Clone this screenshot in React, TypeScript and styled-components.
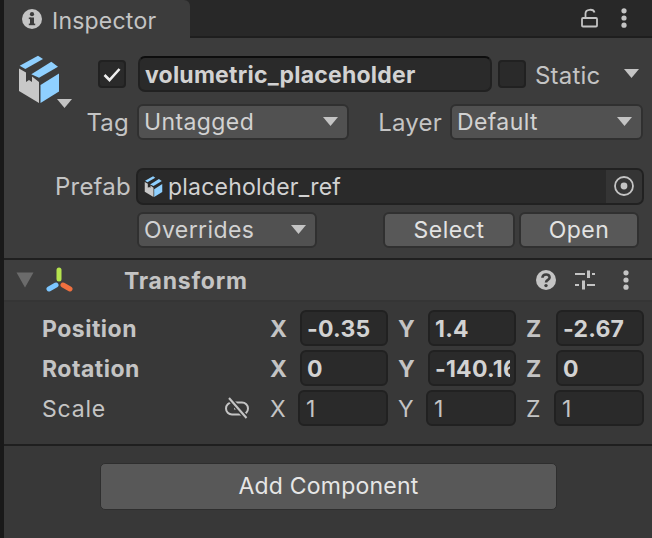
import React from "react";
import styled, { createGlobalStyle } from "styled-components";

const Global = createGlobalStyle`
  html, body { margin: 0; padding: 0; background: #383838; }
  body { font-family: "Inter", "Liberation Sans", sans-serif; }
  #root { width: 652px; height: 538px; overflow: hidden; }
  * { box-sizing: border-box; }
`;

const Root = styled.div`
  display: flex;
  width: 652px;
  height: 538px;
  font-size: 23px;
  letter-spacing: 0.22px;
  color: #c4c4c4;
`;
const Rail = styled.div`
  width: 4px;
  flex: none;
  background: #191919;
`;
const Panel = styled.div`
  flex: 1;
  display: flex;
  flex-direction: column;
  min-width: 0;
`;
const TabBar = styled.div`
  height: 38px;
  flex: none;
  display: flex;
  background: #282828;
  box-shadow: inset 0 -2px 0 #1e1e1e;
`;
const Tab = styled.div`
  width: 186px;
  height: 38px;
  display: flex;
  align-items: center;
  gap: 10px;
  padding-left: 18px;
  background: #3c3c3c;
  border-top-right-radius: 6px;
`;
const TabText = styled.span`
  padding-top: 3px;
`;
const TabTools = styled.div`
  margin-left: auto;
  display: flex;
  align-items: center;
  height: 36px;
  gap: 23px;
  padding-right: 25px;
`;
const Header = styled.section`
  height: 222px;
  flex: none;
  background: #3c3c3c;
  border-bottom: 2px solid #1f1f1f;
`;
const Identity = styled.div`
  display: flex;
  height: 102px;
`;
const IconCell = styled.div`
  width: 81px;
  flex: none;
  padding: 17px 0 0 15px;
`;
const MenuCaret = styled.svg`
  display: block;
  margin: -4px 0 0 38px;
`;
const IdentityRows = styled.div`
  flex: 1;
  display: flex;
  flex-direction: column;
  min-width: 0;
`;
const NameRow = styled.div`
  display: flex;
  align-items: center;
  height: 36px;
  margin-top: 18px;
  padding-left: 13px;
`;
const Check = styled.div<{ $gap: number }>`
  width: 28px;
  height: 28px;
  flex: none;
  margin-right: ${(p) => p.$gap}px;
  display: flex;
  align-items: center;
  justify-content: center;
  background: #2a2a2a;
  border: 2px solid #212121;
  border-radius: 4px;
`;
const NameInput = styled.div`
  width: 354px;
  height: 36px;
  flex: none;
  margin-right: 6px;
  display: flex;
  align-items: center;
  padding: 2px 0 0 5px;
  background: #2a2a2a;
  border: 2px solid #212121;
  border-top-color: #0d0d0d;
  border-radius: 7px;
  font-weight: 700;
  color: #d2d2d2;
`;
const StaticLabel = styled.span`
  flex: 1;
  padding: 2px 0 0 9px;
  font-size: 24px;
`;
const StaticArrow = styled.div`
  margin-right: 12px;
  display: flex;
`;
const TagRow = styled.div`
  display: flex;
  align-items: center;
  height: 36px;
  margin-top: 12px;
`;
const RowLabel = styled.span<{ $w: number }>`
  width: ${(p) => p.$w}px;
  flex: none;
  text-align: right;
  padding-right: 8px;
  font-size: 24px;
`;
const Select = styled.div<{ $w: number; $mr?: number }>`
  width: ${(p) => p.$w}px;
  height: 36px;
  flex: none;
  margin-right: ${(p) => p.$mr ?? 0}px;
  display: flex;
  align-items: center;
  justify-content: space-between;
  padding: 0 8px 0 5px;
  background: #515151;
  border: 2px solid #303030;
  border-radius: 6px;
  color: #d2d2d2;
  letter-spacing: 0.4px;
`;
const PrefabRow = styled.div`
  display: flex;
  align-items: center;
  height: 36px;
  margin-top: 28px;
  padding-left: 51px;
`;
const ObjectField = styled.div`
  width: 508px;
  height: 37px;
  flex: none;
  display: flex;
  align-items: center;
  background: #2a2a2a;
  border: 2px solid #212121;
  border-radius: 7px;
  overflow: hidden;
  color: #d2d2d2;
`;
const ObjectIcon = styled.div`
  display: flex;
  margin: 0 5px 0 6px;
`;
const ObjectName = styled.span`
  flex: 1;
  padding-top: 2px;
`;
const Picker = styled.div`
  width: 36px;
  height: 100%;
  display: flex;
  align-items: center;
  justify-content: center;
  background: #353535;
`;
const ActionRow = styled.div`
  display: flex;
  align-items: center;
  height: 36px;
  margin-top: 8px;
  padding-left: 133px;
`;
const Button = styled.div<{ $w: number; $mr?: number }>`
  width: ${(p) => p.$w}px;
  height: 36px;
  flex: none;
  margin-right: ${(p) => p.$mr ?? 0}px;
  display: flex;
  align-items: center;
  justify-content: center;
  background: #585858;
  border: 2px solid #303030;
  border-radius: 6px;
  color: #e2e2e2;
  letter-spacing: 0.5px;
`;
const TransformHead = styled.div`
  height: 42px;
  flex: none;
  display: flex;
  align-items: center;
  padding-left: 12px;
  background: #3e3e3e;
  border-bottom: 2px solid #353535;
`;
const FoldCaret = styled.svg`
  margin-right: 11px;
`;
const HeadIcon = styled.div`
  display: flex;
  margin-right: 11px;
`;
const HeadTitle = styled.span`
  flex: 1;
  margin-left: 40px;
  padding-top: 2px;
  font-weight: 700;
  letter-spacing: 0.75px;
`;
const HeadTools = styled.div`
  display: flex;
  align-items: center;
  padding-right: 23px;
`;
const HelpSlot = styled.div`
  display: flex;
  margin-right: 19px;
`;
const TuneSlot = styled.div`
  display: flex;
  margin-right: 28px;
`;
const TransformBody = styled.section`
  flex: none;
  height: 144px;
  display: flex;
  flex-direction: column;
  gap: 4px;
  padding-top: 8px;
  background: #383838;
  border-bottom: 2px solid #1f1f1f;
`;
const Row = styled.div`
  display: flex;
  align-items: center;
  height: 36px;
  padding-left: 38px;
`;
const PropLabel = styled.span<{ $bold: boolean }>`
  width: 183px;
  flex: none;
  padding-top: 2px;
  font-weight: ${(p) => (p.$bold ? 700 : 400)};
  letter-spacing: ${(p) => (p.$bold ? 0.5 : 0.8)}px;
`;
const LinkCell = styled.div`
  width: 45px;
  flex: none;
  display: flex;
`;
const Axis = styled.span<{ $bold: boolean }>`
  width: ${(p) => (p.$bold ? 30 : 28)}px;
  flex: none;
  padding-top: 2px;
  font-weight: ${(p) => (p.$bold ? 700 : 400)};
`;
const Vector = styled.div`
  flex: 1;
  display: flex;
  align-items: center;
  padding-right: 8px;
  gap: 10px;
`;
const AxisGroup = styled.div`
  display: flex;
  align-items: center;
`;
const NumberField = styled.div<{ $bold: boolean }>`
  width: ${(p) => (p.$bold ? 88 : 90)}px;
  height: 36px;
  flex: none;
  display: flex;
  align-items: center;
  padding: 2px 4px 0 ${(p) => (p.$bold ? 5 : 6)}px;
  white-space: nowrap;
  background: #2a2a2a;
  border: 2px solid #212121;
  border-radius: 6px;
  font-weight: ${(p) => (p.$bold ? 700 : 400)};
  color: ${(p) => (p.$bold ? "#d2d2d2" : "#c4c4c4")};
`;
const NumberText = styled.span`
  flex: 1;
  min-width: 0;
  overflow: hidden;
`;
const Footer = styled.div`
  flex: 1;
  background: #383838;
  padding: 17px 0 0 96px;
`;
const AddButton = styled.div`
  width: 457px;
  height: 47px;
  display: flex;
  align-items: center;
  justify-content: center;
  padding-bottom: 1px;
  background: #585858;
  border: 1px solid #2e2e2e;
  border-radius: 5px;
  color: #e6e6e6;
`;

const Down = ({ c = "#c4c4c4" }: { c?: string }) => (
  <svg width="16" height="10" viewBox="0 0 16 10"><path d="M0 0H15L7.5 9Z" fill={c} /></svg>
);
const Kebab = () => (
  <svg width="6" height="20" viewBox="0 0 6 20" fill="#c4c4c4">
    <circle cx="3" cy="2.8" r="2.6" /><circle cx="3" cy="10" r="2.6" /><circle cx="3" cy="17.2" r="2.6" />
  </svg>
);
const BoxSvg = styled.svg`
  display: block;
`;
const Box = ({ w, h }: { w: number; h: number }) => (
  <BoxSvg width={w} height={h} viewBox="0 0 40 48">
    <path d="M0 13.5 7 17.5V27L10 25 13 27V21.5L20 27V48L0 36Z" fill="#c8c8c8" />
    <path d="M21.5 30 40 18.5V36.5L21.5 48Z" fill="#8fd0ff" />
    <path d="M.7 10.7 19 .7 24 4 6.3 14Z" fill="#8fd0ff" />
    <path d="M12.3 19.3 32.3 6.7 39 11.7 20 22.7Z" fill="#8fd0ff" />
  </BoxSvg>
);

const rows = [
  { name: "Position", bold: true, v: ["-0.35", "1.4", "-2.67"] },
  { name: "Rotation", bold: true, v: ["0", "-140.16", "0"] },
  { name: "Scale", bold: false, v: ["1", "1", "1"] },
];

export default function App() {
  return (
    <Root>
      <Global />
      <Rail />
      <Panel>
        <TabBar>
          <Tab>
            <svg width="20" height="20" viewBox="0 0 20 20">
              <circle cx="10" cy="10" r="10" fill="#c4c4c4" />
              <rect x="8" y="8.5" width="4" height="7.5" fill="#3c3c3c" />
              <rect x="6.8" y="8.5" width="2" height="1.6" fill="#3c3c3c" />
              <rect x="6.8" y="14.6" width="6.4" height="1.6" fill="#3c3c3c" />
              <circle cx="10" cy="5.2" r="2.1" fill="#3c3c3c" />
            </svg>
            <TabText>Inspector</TabText>
          </Tab>
          <TabTools>
            <svg width="17" height="20" viewBox="0 0 17 20" fill="none" stroke="#c4c4c4" strokeWidth="1.8">
              <rect x="1" y="10" width="15" height="8.5" rx="1" />
              <path d="M4.5 10V5.5C4.5 1 12.5 .5 13.5 4.5" />
            </svg>
            <Kebab />
          </TabTools>
        </TabBar>
        <Header>
          <Identity>
            <IconCell>
              <Box w={40} h={48} />
              <MenuCaret width="15" height="9" viewBox="0 0 15 9"><path d="M0 0H15L7.5 9Z" fill="#c4c4c4" /></MenuCaret>
            </IconCell>
            <IdentityRows>
              <NameRow>
                <Check $gap={12}>
                  <svg width="18" height="15" viewBox="0 0 18 15" fill="none" stroke="#eee" strokeWidth="2.6"><path d="M1.5 8 6.5 13 16.5 2" /></svg>
                </Check>
                <NameInput>volumetric_placeholder</NameInput>
                <Check $gap={0} />
                <StaticLabel>Static</StaticLabel>
                <StaticArrow><Down /></StaticArrow>
              </NameRow>
              <TagRow>
                <RowLabel $w={52}>Tag</RowLabel>
                <Select $w={212} $mr={29}>Untagged<Down /></Select>
                <RowLabel $w={72}>Layer</RowLabel>
                <Select $w={193}>Default<Down /></Select>
              </TagRow>
            </IdentityRows>
          </Identity>
          <PrefabRow>
            <RowLabel $w={81}>Prefab</RowLabel>
            <ObjectField>
              <ObjectIcon><Box w={19} h={21} /></ObjectIcon>
              <ObjectName>placeholder_ref</ObjectName>
              <Picker>
                <svg width="20" height="20" viewBox="0 0 20 20"><circle cx="10" cy="10" r="9" fill="none" stroke="#c4c4c4" strokeWidth="1.8" /><circle cx="10" cy="10" r="3.4" fill="#c4c4c4" /></svg>
              </Picker>
            </ObjectField>
          </PrefabRow>
          <ActionRow>
            <Select $w={180} $mr={66}>Overrides<Down /></Select>
            <Button $w={132} $mr={4}>Select</Button>
            <Button $w={120}>Open</Button>
          </ActionRow>
        </Header>
        <TransformHead>
          <FoldCaret width="18" height="16" viewBox="0 0 18 16"><path d="M0.5 0.5H17.5L9 15.5Z" fill="#6b6b6b" /></FoldCaret>
          <HeadIcon>
            <svg width="28" height="26" viewBox="0 0 28 26" fill="none" strokeWidth="5" strokeLinecap="round">
              <path d="M14 3V12" stroke="#b5e34e" />
              <path d="M11 18 4 22" stroke="#7cc6ff" />
              <path d="M18 18 25 22" stroke="#f0703f" />
            </svg>
          </HeadIcon>
          <HeadTitle>Transform</HeadTitle>
          <HeadTools>
            <HelpSlot>
              <svg width="20" height="20" viewBox="0 0 20 20">
                <circle cx="10" cy="10" r="10" fill="#c4c4c4" />
                <path d="M6.4 7.8C6.6 3.4 13.6 3.4 13.6 7.4 13.6 10 10 9.8 10 12.6" fill="none" stroke="#3e3e3e" strokeWidth="2.6" />
                <circle cx="10" cy="15.6" r="1.7" fill="#3e3e3e" />
              </svg>
            </HelpSlot>
            <TuneSlot>
              <svg width="20" height="20" viewBox="0 0 20 20" fill="#c4c4c4">
                <rect x="0" y="3" width="10" height="2" /><rect x="12" y="0.5" width="3" height="7.5" /><rect x="17" y="3" width="3" height="2" />
                <rect x="0" y="14" width="4" height="2" /><rect x="7" y="10.5" width="3" height="9" /><rect x="12" y="14" width="8" height="2" />
              </svg>
            </TuneSlot>
            <Kebab />
          </HeadTools>
        </TransformHead>
        <TransformBody>
          {rows.map((r) => (
            <Row key={r.name}>
              <PropLabel $bold={r.bold}>{r.name}</PropLabel>
              <LinkCell>
                {!r.bold && (
                  <svg width="24" height="22" viewBox="0 0 24 22" fill="none" strokeWidth="2">
                    <rect x="1" y="5.5" width="22" height="12" rx="6" stroke="#c4c4c4" />
                    <path d="M9 11.5H15" stroke="#c4c4c4" />
                    <path d="M4 1 21.5 21" stroke="#383838" strokeWidth="5" />
                    <path d="M4 1 21.5 21" stroke="#c4c4c4" />
                  </svg>
                )}
              </LinkCell>
              <Vector>
                {["X", "Y", "Z"].map((a, i) => (
                  <AxisGroup key={a}>
                    <Axis $bold={r.bold}>{a}</Axis>
                    <NumberField $bold={r.bold}><NumberText>{r.v[i]}</NumberText></NumberField>
                  </AxisGroup>
                ))}
              </Vector>
            </Row>
          ))}
        </TransformBody>
        <Footer>
          <AddButton>Add Component</AddButton>
        </Footer>
      </Panel>
    </Root>
  );
}
